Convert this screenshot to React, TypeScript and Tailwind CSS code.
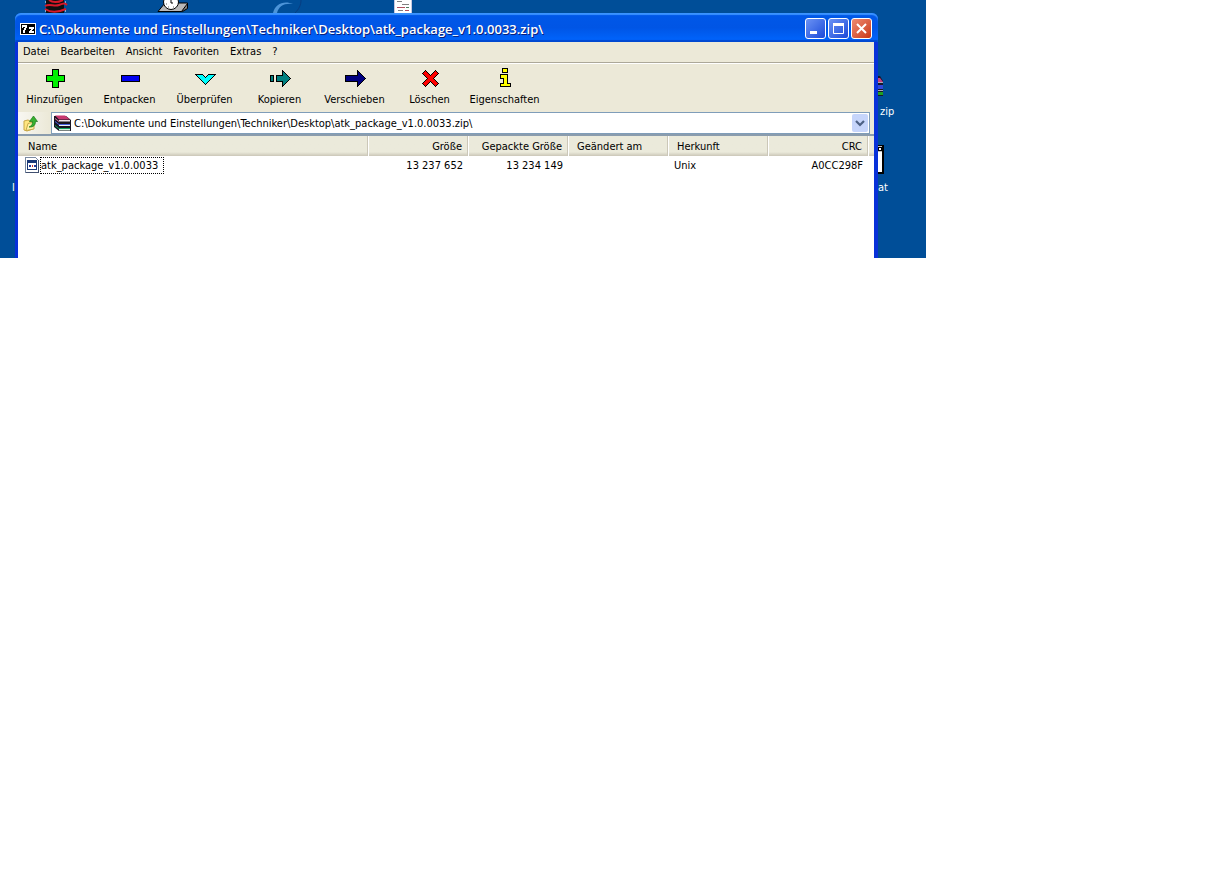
import type { ReactNode } from "react";

const ARCHIVE_PATH =
  "C:\\Dokumente und Einstellungen\\Techniker\\Desktop\\atk_package_v1.0.0033.zip\\";

const menuItems = ["Datei", "Bearbeiten", "Ansicht", "Favoriten", "Extras", "?"];

const files = [
  {
    name: "atk_package_v1.0.0033",
    size: "13 237 652",
    packed: "13 234 149",
    modified: "",
    host: "Unix",
    crc: "A0CC298F",
  },
];

function ToolIcon({ children }: { children: ReactNode }) {
  return (
    <svg
      width="24"
      height="24"
      viewBox="0 0 24 24"
      stroke="#000"
      shapeRendering="crispEdges"
      aria-hidden="true"
    >
      {children}
    </svg>
  );
}

const tools = [
  {
    label: "Hinzufügen",
    icon: <path d="M9.5 2.5h6v6h6v6h-6v6h-6v-6h-6v-6h6z" fill="#00f000" />,
  },
  {
    label: "Entpacken",
    icon: <path d="M3.5 8.5h18v6h-18z" fill="#0000f0" />,
  },
  {
    label: "Überprüfen",
    icon: <path d="M2.5 7.500h7l3 3 3-3h7l-10 10z" fill="#00ffff" />,
  },
  {
    label: "Kopieren",
    icon: (
      <>
        <path d="M2.5 8.5h3v6h-3z" fill="#008080" />
        <path d="M8.5 8.5h6v-5l8 8-8 8v-5h-6z" fill="#008080" />
      </>
    ),
  },
  {
    label: "Verschieben",
    icon: <path d="M2.5 8.5h12v-5l8 8-8 8v-5h-12z" fill="#000080" />,
  },
  {
    label: "Löschen",
    icon: (
      <path
        d="M4.5 6.5l3-3 5 5 5-5 3 3-5 5 5 5-3 3-5-5-5 5-3-3 5-5z"
        fill="#ff0000"
      />
    ),
  },
  {
    label: "Eigenschaften",
    icon: (
      <>
        <path d="M9.5 1.500h5v4h-5z" fill="#ffff00" />
        <path d="M7.500 7.500h7v9h3v3h-10v-3h3v-5h-3z" fill="#ffff00" />
      </>
    ),
  },
];

function BooksIcon() {
  return (
    <svg width="17" height="17" viewBox="0 0 17 17" aria-hidden="true">
      <path d="M0 1h12l5 4v11H5l-5-4z" fill="#181420" />
      <path d="M1 .5h10l5 4H5z" fill="#c83870" />
      <path d="M5 5h11v1.500H5z" fill="#f0e4ec" />
      <path d="M1 3l4 3v1L1 4z" fill="#e878a8" />
      <path d="M1 6l4 3h11v1H5L1 7z" fill="#4860e0" />
      <path d="M5 10h11v1H5z" fill="#e8ecf8" />
      <path d="M1 10l4 3h11v1H5l-4-3z" fill="#10a060" />
      <path d="M5 14h11v1.500H5z" fill="#d8f0e0" />
    </svg>
  );
}

function FolderUpIcon() {
  return (
    <svg width="16" height="17" viewBox="0 0 16 17" aria-hidden="true">
      <path d="M1 6l4-1 2 1 3-1v9l-6 2-3-1z" fill="#ffe680" stroke="#c8a848" />
      <path d="M3 15.500l2-7 6-1.500v7z" fill="#fff2a8" stroke="#c8a848" />
      <path
        d="M6 12c3-1 3.500-3 3.500-5.500H6.500L10.500 1l4 5.500h-2c0 3.500-2 6-6.500 5.500z"
        fill="#38b030"
        stroke="#187818"
        strokeWidth=".7"
      />
    </svg>
  );
}

function ExeIcon() {
  return (
    <svg width="15" height="16" viewBox="0 0 15 16" shapeRendering="crispEdges" aria-hidden="true">
      <path d="M.5.5h10l3 3v12H.5z" fill="#fff" stroke="#7888a0" />
      <path d="M13 3h1v13H1v-1h12z" fill="#405070" />
      <path d="M2.5 3.5h9v9h-9z" fill="#fff" stroke="#183878" />
      <path d="M2 3h10v3H2z" fill="#183878" />
      <path d="M4 8h2v2H4z" fill="#283c98" />
      <path d="M7 8h1v2H7z" fill="#c03030" />
      <path d="M9 8h2v2H9z" fill="#283c98" />
    </svg>
  );
}

// Shortcuts lying around and behind the window
function DesktopItems() {
  return (
    <div className="absolute inset-0 text-white">
      <svg className="absolute top-0 left-[44px]" width="24" height="13" viewBox="0 0 24 13" aria-hidden="true">
        <path d="M2 0h18v13H2z" fill="#101010" />
        <path
          d="M5 0c4 3 10 2 14 0M1 6c5-3 9 1 14-1s6-2 8 0M1 9c6 4 14 3 21 0"
          fill="none"
          stroke="#d81828"
          strokeWidth="2"
        />
        <path d="M1 2h1M1 11h1M21 2h1M21 11h1" stroke="#fff" />
      </svg>
      <svg className="absolute top-0 left-[157px]" width="32" height="13" viewBox="0 0 32 13" aria-hidden="true">
        <path d="M1 11.500L8 3h22.500v3l-6 5.500z" fill="#b8b8b8" stroke="#000" />
        <path d="M24.500 11.500l6-8v5l-5 3z" fill="#808080" stroke="#000" />
        <circle cx="14" cy="2" r="7.500" fill="#fff" stroke="#000" />
        <path d="M14 0v3h2" fill="none" stroke="#000" />
        <path d="M9 4h1M11 7h1M16 7h1" stroke="#606060" />
      </svg>
      <svg className="absolute top-0 left-[270px]" width="34" height="13" viewBox="0 0 34 13" aria-hidden="true">
        <path d="M3 13C5 4 14 0 23 4 14 3 9 6 7 13z" fill="#4c94d8" />
        <path d="M31 0c0 5-2 9-6 13" fill="none" stroke="#083c80" />
      </svg>
      <svg
        className="absolute top-0 left-[394px]"
        width="18"
        height="13"
        viewBox="0 0 18 13"
        shapeRendering="crispEdges"
        aria-hidden="true"
      >
        <path d="M0 0h18v13H0z" fill="#fff" />
        <path d="M0 0h1v13H0zM17 0h1v13h-1z" fill="#c8c8e0" />
        <path d="M3 1.500h5M8 4.500h7M4 10.500h5" stroke="#808080" />
        <path d="M3 7.500h8M11 10.500h4" stroke="#b05060" />
        <path d="M12 7.500h3" stroke="#508060" />
      </svg>
      <svg className="absolute top-[74px] left-[868px]" width="16" height="23" viewBox="0 0 16 23" aria-hidden="true">
        <path d="M0 2h12l3 5v15H0z" fill="#181828" />
        <path d="M0 4h12l3 4H0z" fill="#c84080" />
        <path d="M0 11h15v4H0z" fill="#3048d8" />
        <path d="M0 18h15v3H0z" fill="#20a020" />
        <path d="M9 8.500h6M9 16.500h6" stroke="#a8a8b8" />
      </svg>
      <span className="absolute top-[105px] left-[880px] leading-[13px]">zip</span>
      <svg
        className="absolute top-[145px] left-[868px]"
        width="16"
        height="29"
        viewBox="0 0 16 29"
        shapeRendering="crispEdges"
        aria-hidden="true"
      >
        <path d="M0 0h16v29H0z" fill="#000" />
        <path d="M0 1h14v26H0z" fill="#c0c0c0" />
        <path d="M0 7h14v20H0z" fill="#fff" />
        <path d="M10.500 2.500h3v3h-3z" fill="#fff" stroke="#000" />
      </svg>
      <span className="absolute top-[181px] left-[878px] leading-[13px]">at</span>
      <span className="absolute top-[181px] left-[12px] leading-[13px]">l</span>
    </div>
  );
}

function CaptionButton({
  label,
  className,
  children,
}: {
  label: string;
  className: string;
  children: ReactNode;
}) {
  return (
    <button
      type="button"
      aria-label={label}
      className={`flex size-[21px] items-center justify-center rounded-[3px] border border-white ${className}`}
    >
      <svg width="19" height="19" viewBox="0 0 19 19" fill="none" stroke="#fff" aria-hidden="true">
        {children}
      </svg>
    </button>
  );
}

function TitleBar() {
  return (
    <header className="flex h-[29px] items-center rounded-t-[6px] bg-linear-to-b from-[#0058e8] via-[#0055e5] to-[#0066ff] pt-[2px] pr-[6px] pl-[5px] shadow-[inset_0_2px_1px_#3a93ff,inset_0_-2px_1px_#0048d0]">
      <svg width="16" height="12" viewBox="0 0 16 12" shapeRendering="crispEdges" aria-hidden="true">
        <path d="M.5.5h15v11H.5z" fill="#000" stroke="#fff" />
        <path
          d="M2 2h5v3H6v2H5v3H3V7h1V5h1V4H3v1H2zM9 4h5v2h-1v1h-1v1h2v2H9V8h1V7h1V6H9z"
          fill="#fff"
        />
      </svg>
      <h1 className="ml-[3px] flex-1 truncate font-['Open_Sans',sans-serif] text-[13px] leading-[18px] font-semibold text-white [text-shadow:1px_1px_0_#0a1e7a]">
        {ARCHIVE_PATH}
      </h1>
      <div className="flex gap-[2px]">
        <CaptionButton label="Minimieren" className="bg-linear-to-br from-[#6c92f4] to-[#1c48d8]">
          <path d="M4 13.500h7" strokeWidth="3" />
        </CaptionButton>
        <CaptionButton label="Maximieren" className="bg-linear-to-br from-[#6c92f4] to-[#1c48d8]">
          <path d="M4.500 5.500h10v9h-10z" />
          <path d="M4 5.500h11" strokeWidth="3" />
        </CaptionButton>
        <CaptionButton label="Schließen" className="bg-linear-to-br from-[#ee8a70] to-[#c83410]">
          <path d="M5 5l9 9M14 5l-9 9" strokeWidth="2" />
        </CaptionButton>
      </div>
    </header>
  );
}

function MenuBar() {
  return (
    <nav className="flex h-[21px] items-start gap-[11px] border-b border-[#aca899] pt-[3px] pl-[5px]">
      {menuItems.map((item) => (
        <button key={item} type="button" className="leading-[13px]">
          {item}
        </button>
      ))}
    </nav>
  );
}

function Toolbar() {
  return (
    <div className="flex h-[49px] border-t border-white pt-[3px]">
      {tools.map((tool) => (
        <button
          key={tool.label}
          type="button"
          className="flex w-[75px] flex-col items-center gap-[2px] pr-[2px]"
        >
          <ToolIcon>{tool.icon}</ToolIcon>
          <span className="leading-[13px]">{tool.label}</span>
        </button>
      ))}
    </div>
  );
}

function AddressBar() {
  return (
    <div className="flex h-[22px] items-start pr-[4px]">
      <button
        type="button"
        aria-label="Eine Ebene höher"
        className="flex h-[22px] w-[31px] items-center bg-linear-to-r from-[#f8f7f2] to-[#ece9d8] pl-[5px]"
      >
        <FolderUpIcon />
      </button>
      <div className="relative ml-[2px] flex h-[22px] flex-1 items-center border border-[#7f9db9] bg-white pl-[2px]">
        <BooksIcon />
        <select
          aria-label="Adresse"
          className="h-[20px] flex-1 appearance-none bg-transparent pt-[2px] pl-[3px] leading-[18px] outline-none"
        >
          <option>{ARCHIVE_PATH}</option>
        </select>
        <svg
          className="pointer-events-none absolute top-px right-px"
          width="16"
          height="18"
          viewBox="0 0 16 18"
          aria-hidden="true"
        >
          <rect width="16" height="18" rx="2" fill="#c6d5fb" />
          <path d="M4 7l4 4 4-4" fill="none" stroke="#4d6185" strokeWidth="2.2" />
        </svg>
      </div>
    </div>
  );
}

function FileTable() {
  const head = "border-r border-[#cbc7b8] p-0 px-[5px] font-normal leading-[13px] shadow-[1px_0_0_#fff]";
  return (
    <div className="min-h-[124px] border-t-2 border-[#8a9cad] bg-white">
      <table className="w-full table-fixed border-separate border-spacing-0">
        <colgroup>
          <col className="w-[350px]" />
          <col className="w-[100px]" />
          <col className="w-[100px]" />
          <col className="w-[100px]" />
          <col className="w-[100px]" />
          <col className="w-[100px]" />
          <col />
        </colgroup>
        <thead>
          <tr className="h-[20px] bg-linear-to-b from-[#ebeadb] from-80% to-[#cbc7b8]">
            <th className={`${head} pl-[10px] text-left`}>Name</th>
            <th className={`${head} text-right`}>Größe</th>
            <th className={`${head} text-right`}>Gepackte Größe</th>
            <th className={`${head} pl-[9px] text-left`}>Geändert am</th>
            <th className={`${head} pl-[9px] text-left`}>Herkunft</th>
            <th className={`${head} text-right`}>CRC</th>
            <td className="p-0" />
          </tr>
        </thead>
        <tbody>
          {files.map((file) => (
            <tr key={file.name} className="h-[18px] leading-[13px]">
              <td className="p-0 pl-[7px]">
                <div className="flex items-center">
                  <ExeIcon />
                  <span className="border border-dotted border-black pr-[5px] leading-[15px]">{file.name}</span>
                </div>
              </td>
              <td className="p-0 pr-[5px] text-right">{file.size}</td>
              <td className="p-0 pr-[5px] text-right">{file.packed}</td>
              <td className="p-0 pl-[6px]">{file.modified}</td>
              <td className="p-0 pl-[6px]">{file.host}</td>
              <td className="p-0 pr-[5px] text-right">{file.crc}</td>
              <td className="p-0" />
            </tr>
          ))}
        </tbody>
      </table>
    </div>
  );
}

export default function App() {
  return (
    <main className="relative w-full max-w-[926px] overflow-hidden bg-[#004e98] pt-[13px] font-['DejaVu_Sans_Condensed','DejaVu_Sans',sans-serif] text-[11px] text-black">
      <DesktopItems />
      <section className="relative mr-[48px] ml-[15px]">
        <TitleBar />
        <div className="border-r-[4px] border-l-[3px] border-[#0831d9] bg-[#ece9d8]">
          <MenuBar />
          <Toolbar />
          <AddressBar />
          <FileTable />
        </div>
      </section>
    </main>
  );
}
